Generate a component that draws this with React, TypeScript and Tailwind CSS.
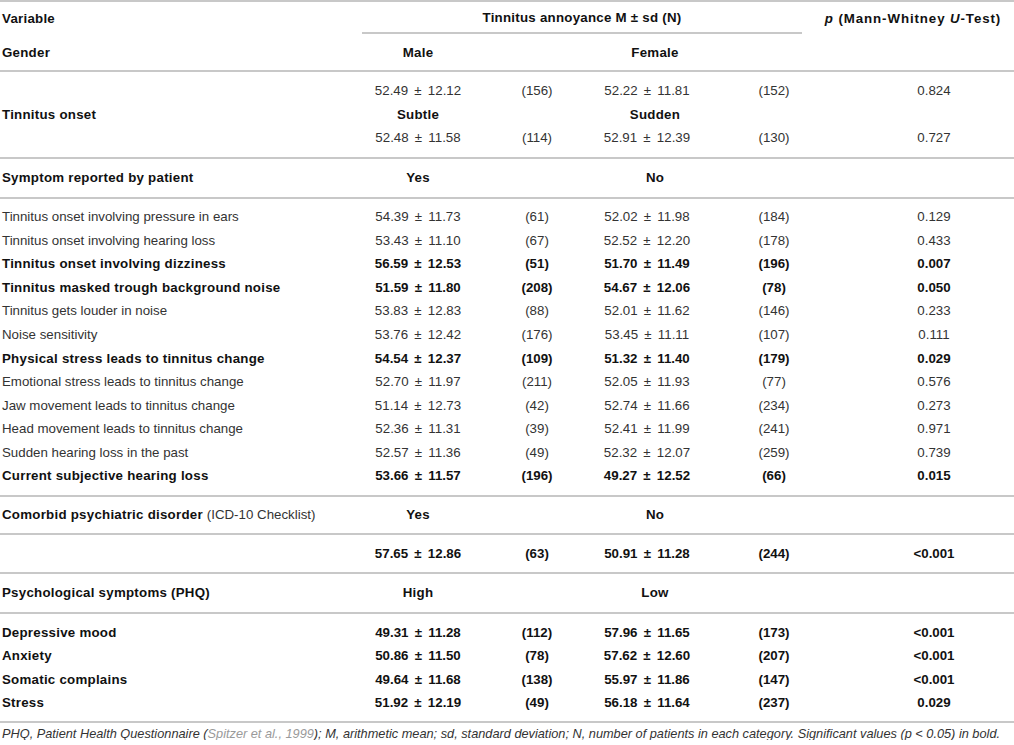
import type { ReactNode } from 'react';

type Row = {
  label: ReactNode;
  m1: string;
  n1: string;
  m2: string;
  n2: string;
  p: string;
  bold?: boolean;
};

const SYMPTOMS: Row[] = [
  { label: 'Tinnitus onset involving pressure in ears', m1: '54.39 ± 11.73', n1: '(61)', m2: '52.02 ± 11.98', n2: '(184)', p: '0.129' },
  { label: 'Tinnitus onset involving hearing loss', m1: '53.43 ± 11.10', n1: '(67)', m2: '52.52 ± 12.20', n2: '(178)', p: '0.433' },
  { label: 'Tinnitus onset involving dizziness', m1: '56.59 ± 12.53', n1: '(51)', m2: '51.70 ± 11.49', n2: '(196)', p: '0.007', bold: true },
  { label: 'Tinnitus masked trough background noise', m1: '51.59 ± 11.80', n1: '(208)', m2: '54.67 ± 12.06', n2: '(78)', p: '0.050', bold: true },
  { label: 'Tinnitus gets louder in noise', m1: '53.83 ± 12.83', n1: '(88)', m2: '52.01 ± 11.62', n2: '(146)', p: '0.233' },
  { label: 'Noise sensitivity', m1: '53.76 ± 12.42', n1: '(176)', m2: '53.45 ± 11.11', n2: '(107)', p: '0.111' },
  { label: 'Physical stress leads to tinnitus change', m1: '54.54 ± 12.37', n1: '(109)', m2: '51.32 ± 11.40', n2: '(179)', p: '0.029', bold: true },
  { label: 'Emotional stress leads to tinnitus change', m1: '52.70 ± 11.97', n1: '(211)', m2: '52.05 ± 11.93', n2: '(77)', p: '0.576' },
  { label: 'Jaw movement leads to tinnitus change', m1: '51.14 ± 12.73', n1: '(42)', m2: '52.74 ± 11.66', n2: '(234)', p: '0.273' },
  { label: 'Head movement leads to tinnitus change', m1: '52.36 ± 11.31', n1: '(39)', m2: '52.41 ± 11.99', n2: '(241)', p: '0.971' },
  { label: 'Sudden hearing loss in the past', m1: '52.57 ± 11.36', n1: '(49)', m2: '52.32 ± 12.07', n2: '(259)', p: '0.739' },
  { label: 'Current subjective hearing loss', m1: '53.66 ± 11.57', n1: '(196)', m2: '49.27 ± 12.52', n2: '(66)', p: '0.015', bold: true },
];

const PHQ: Row[] = [
  { label: 'Depressive mood', m1: '49.31 ± 11.28', n1: '(112)', m2: '57.96 ± 11.65', n2: '(173)', p: '<0.001', bold: true },
  { label: 'Anxiety', m1: '50.86 ± 11.50', n1: '(78)', m2: '57.62 ± 12.60', n2: '(207)', p: '<0.001', bold: true },
  { label: 'Somatic complains', m1: '49.64 ± 11.68', n1: '(138)', m2: '55.97 ± 11.86', n2: '(147)', p: '<0.001', bold: true },
  { label: 'Stress', m1: '51.92 ± 12.19', n1: '(49)', m2: '56.18 ± 11.64', n2: '(237)', p: '0.029', bold: true },
];

function Rule() {
  return <div className="h-[2px] w-full bg-[#c8c8c8]" />;
}

// mean ± sd, with the wider gaps round the ± that the source typesetting uses
function MeanSd({ value }: { value: string }) {
  const [m, sd] = value.split(' ± ');
  return (
    <span className="tracking-normal">
      {m} <span className="mx-[2.5px]">±</span> {sd}
    </span>
  );
}

function DataRow({ row }: { row: Row }) {
  const weight = row.bold ? 'font-bold text-[#111] tracking-[0.25px]' : 'font-normal text-[#333]';
  return (
    <div className={`flex h-[23.55px] items-center ${weight}`}>
      <div className="w-[362px] pl-[2px]">{row.label}</div>
      <div className="w-[112px] text-center">
        <MeanSd value={row.m1} />
      </div>
      <div className="w-[126px] text-center tracking-normal">{row.n1}</div>
      <div className="w-[94px] text-center">
        <MeanSd value={row.m2} />
      </div>
      <div className="w-[160px] text-center tracking-normal">{row.n2}</div>
      <div className="w-[160px] text-center tracking-normal">{row.p}</div>
    </div>
  );
}

function GroupHeader({ label, left, right, h }: { label: ReactNode; left: string; right: string; h: string }) {
  return (
    <div className={`flex ${h} items-center font-bold tracking-[0.25px] text-[#111]`}>
      <div className="w-[362px] pl-[2px]">{label}</div>
      <div className="w-[112px] text-center">{left}</div>
      <div className="w-[126px]" />
      <div className="w-[94px] pl-[16px] text-center">{right}</div>
    </div>
  );
}

export default function App() {
  return (
    <div className="w-[1014px] bg-white font-['Liberation_Sans',Arial,sans-serif] text-[13.3px] leading-none">
      <Rule />
      <div className="flex h-[32px] items-center pt-[1px] font-bold tracking-[0.25px] text-[#111]">
        <div className="w-[362px] pl-[2px]">Variable</div>
        <div className="flex h-full w-[440px] items-center justify-center border-b-2 border-[#c8c8c8] pt-[1px]">
          Tinnitus annoyance M ± sd (N)
        </div>
        <div className="w-[212px] pl-[10px] text-center tracking-[0.9px]">
          <i>p</i> (Mann-Whitney <i>U</i>-Test)
        </div>
      </div>
      <GroupHeader label="Gender" left="Male" right="Female" h="h-[36px] pt-[2px]" />
      <Rule />
      <div className="pb-[7.5px] pt-[7px]">
        <DataRow row={{ label: '', m1: '52.49 ± 12.12', n1: '(156)', m2: '52.22 ± 11.81', n2: '(152)', p: '0.824' }} />
        <GroupHeader label="Tinnitus onset" left="Subtle" right="Sudden" h="h-[23.55px]" />
        <DataRow row={{ label: '', m1: '52.48 ± 11.58', n1: '(114)', m2: '52.91 ± 12.39', n2: '(130)', p: '0.727' }} />
      </div>
      <Rule />
      <GroupHeader label="Symptom reported by patient" left="Yes" right="No" h="h-[38px]" />
      <Rule />
      <div className="pb-[7.4px] pt-[6px]">
        {SYMPTOMS.map((r, i) => (
          <DataRow key={i} row={r} />
        ))}
      </div>
      <Rule />
      <GroupHeader
        label={
          <>
            Comorbid psychiatric disorder{' '}
            <span className="font-normal tracking-normal text-[#333]">(ICD-10 Checklist)</span>
          </>
        }
        left="Yes"
        right="No"
        h="h-[36px]"
      />
      <Rule />
      <div className="pb-[6.5px] pt-[7px]">
        <DataRow row={{ label: '', m1: '57.65 ± 12.86', n1: '(63)', m2: '50.91 ± 11.28', n2: '(244)', p: '<0.001', bold: true }} />
      </div>
      <Rule />
      <GroupHeader label="Psychological symptoms (PHQ)" left="High" right="Low" h="h-[38px]" />
      <Rule />
      <div className="pb-[6.5px] pt-[6.3px]">
        {PHQ.map((r, i) => (
          <DataRow key={i} row={r} />
        ))}
      </div>
      <Rule />
      <div className="whitespace-nowrap pl-[2px] pt-[4.5px] text-[12.75px] italic text-[#333]">
        PHQ, Patient Health Questionnaire (<span className="text-[#9a9a9a]">Spitzer et al., 1999</span>); M, arithmetic mean; sd, standard
        deviation; N, number of patients in each category. Significant values (p {'<'} 0.05) in bold.
      </div>
    </div>
  );
}
